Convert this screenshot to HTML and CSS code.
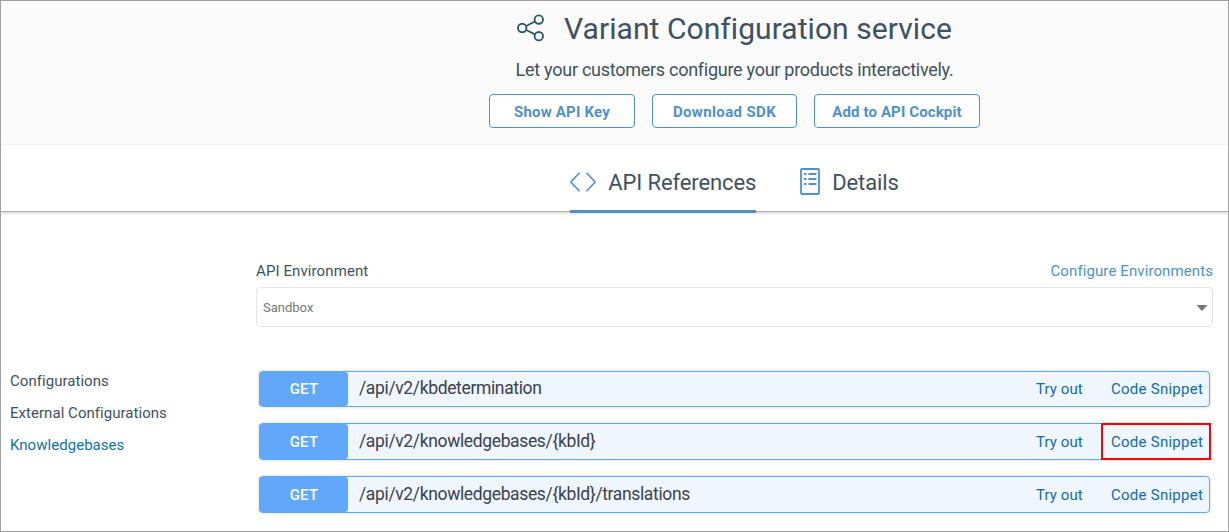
FILE: index.html
```html
<!DOCTYPE html>
<html lang="en">
<head>
<meta charset="utf-8">
<title>Variant Configuration service</title>
<link rel="stylesheet" href="styles.css">
</head>
<body>
<div class="page">
  <header class="hero">
    <div class="title-row">
      <svg class="share-icon" width="28" height="28" viewBox="0 0 28 28" fill="none" stroke="#2c5777" stroke-width="1.9">
        <circle cx="5.2" cy="14" r="4.2"/><circle cx="21.8" cy="5.6" r="4.2"/><circle cx="21.8" cy="22.2" r="4.2"/>
        <path d="M9.2 12 18 7.5M9.2 16 18 20.3"/>
      </svg>
      <h1 class="title">Variant Configuration service</h1>
    </div>
    <p class="subtitle">Let your customers configure your products interactively.</p>
    <div class="actions">
      <button class="btn btn-key">Show API Key</button>
      <button class="btn btn-sdk">Download SDK</button>
      <button class="btn btn-cockpit">Add to API Cockpit</button>
    </div>
  </header>
  <nav class="tabs">
    <a class="tab active">
      <svg class="code-icon" width="26" height="20" viewBox="0 0 26 20" fill="none" stroke="#5090cd" stroke-width="1.6"><path d="M9.5 .7.9 10l8.6 9.3M16.5.7 25.1 10l-8.6 9.3"/></svg>
      <span>API References</span>
    </a>
    <a class="tab">
      <svg class="list-icon" width="20" height="27" viewBox="0 0 20 27" fill="none" stroke="#5090cd" stroke-width="1.8"><rect x="1" y="1" width="18" height="25" rx="1"/><path d="M4 6h2.5M8.5 6h8M4 11h2.5M8.5 11h8M4 16h2.5M8.5 16h8" stroke-width="1.8"/></svg>
      <span>Details</span>
    </a>
  </nav>
  <div class="body">
    <aside class="side">
      <a class="side-link">Configurations</a>
      <a class="side-link">External Configurations</a>
      <a class="side-link current">Knowledgebases</a>
    </aside>
    <main class="main">
      <div class="env-head"><span>API Environment</span><a class="env-link">Configure Environments</a></div>
      <div class="select"><span>Sandbox</span><svg width="12" height="6" viewBox="0 0 12 6"><path d="M.5 0h11L6 6z" fill="#777"/></svg></div>
      <div class="ops">
        <div class="op"><span class="method">GET</span><span class="path">/api/v2/kbdetermination</span><a class="try">Try out</a><a class="snippet">Code Snippet</a></div>
        <div class="op tall"><span class="method">GET</span><span class="path">/api/v2/knowledgebases/{kbId}</span><a class="try">Try out</a><a class="snippet marked">Code Snippet</a></div>
        <div class="op tall"><span class="method">GET</span><span class="path">/api/v2/knowledgebases/{kbId}/translations</span><a class="try">Try out</a><a class="snippet">Code Snippet</a></div>
      </div>
    </main>
  </div>
</div>
</body>
</html>
```
FILE: styles.css
```css
* { box-sizing: border-box; }
body { margin: 0; font-family: Roboto, sans-serif; color: #3f5161; }
.page { width: 1229px; height: 532px; border: 1px solid #a0a0a0; background: #fff; overflow: hidden; }
.hero { height: 144px; padding: 11px 0 0 239px; background: #fafafa; display: flex; flex-direction: column; align-items: center; }
.title-row { display: flex; align-items: center; gap: 19px; height: 34px; padding-left: 1px; }
.share-icon { margin-bottom: 2px; }
.title { margin: 0; font-size: 30px; font-weight: 400; line-height: 34px; letter-spacing: .06px; }
.subtitle { margin: 13px 0 0; padding-left: 1px; font-size: 18px; line-height: 22px; letter-spacing: -.27px; }
.actions { display: flex; gap: 17px; margin-top: 13px; }
.btn { height: 34px; padding: 1px 0 0 1px; border: 1px solid #5090cd; border-radius: 4px; background: #fff; color: #5090cd; font: 700 15px Roboto, sans-serif; letter-spacing: .12px; }
.btn-key { width: 146px; letter-spacing: .2px; }
.btn-sdk { width: 145px; letter-spacing: .36px; }
.btn-cockpit { width: 166px; }
.tabs { height: 67px; padding-left: 240px; display: flex; justify-content: center; gap: 44px; border-bottom: 1px solid #b0b0b0; box-shadow: 0 1px 3px rgba(0,0,0,.2); font-size: 22px; letter-spacing: -.12px; }
.tab { height: 68px; display: flex; align-items: center; gap: 12px; padding-top: 10px; border-bottom: 3px solid transparent; }
.tab.active { border-color: #5090cd; }
.code-icon, .list-icon { margin-bottom: 2px; }
.body { display: flex; }
.side { width: 255px; padding: 153px 0 0 9px; font-size: 15px; letter-spacing: .04px; }
.side-link { display: block; line-height: 32px; }
.side-link.current { color: #1070ac; }
.main { width: 957px; padding-top: 49px; font-size: 15px; }
.env-head { display: flex; justify-content: space-between; line-height: 20px; letter-spacing: .1px; }
.env-link { color: #5090cd; }
.select { height: 40px; margin-top: 6px; padding: 0 4px 0 6px; border: 1px solid #e5e5e5; border-radius: 4px; display: flex; align-items: center; justify-content: space-between; font-size: 13px; color: #777; }
.select svg { margin-top: 2px; }
.ops { margin: 44px 3px 0; display: flex; flex-direction: column; gap: 16px; }
.op { height: 36px; display: flex; align-items: stretch; border: 1px solid #61a8fb; border-radius: 4px; background: #eff6fe; box-shadow: 0 0 3px rgba(0,0,0,.19); line-height: 34px; }
.op.tall { height: 37px; line-height: 36px; }
.method { width: 89px; margin-left: -1px; padding-left: 1px; background: #61a8fb; color: #fff; border-radius: 3px; text-align: center; font-weight: 500; letter-spacing: .2px; }
.path { flex: 1; margin-top: -1px; padding-left: 11px; font-size: 17.5px; letter-spacing: -.36px; color: #3b4151; }
.try, .snippet { color: #1469b0; }
.try { width: 65px; letter-spacing: .1px; }
.snippet { width: 108px; padding-left: 10px; letter-spacing: .26px; }
.snippet.marked { margin: -1px -2px -1px 0; width: 110px; border: 2px solid red; padding-left: 8px; line-height: 34px; }
```
